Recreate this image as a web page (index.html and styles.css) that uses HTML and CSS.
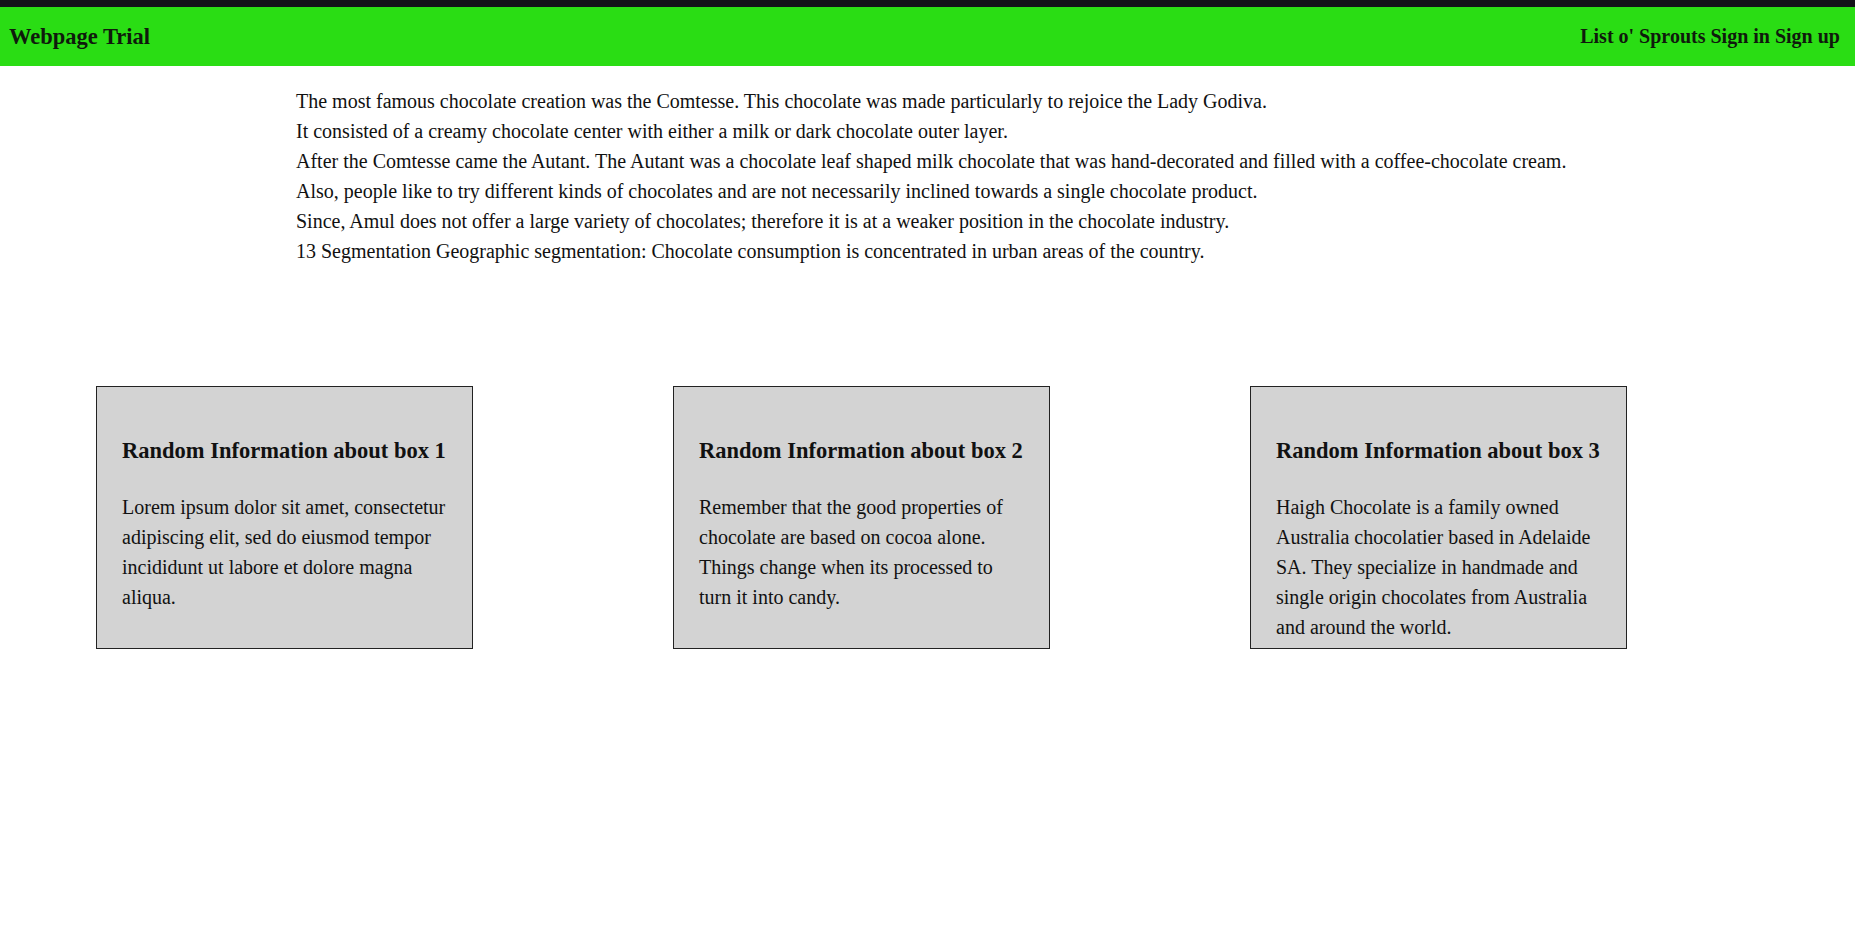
FILE: index.html
```html
<!DOCTYPE html>
<html lang="en">
<head>
<meta charset="utf-8">
<title>Webpage Trial</title>
<link rel="stylesheet" href="styles.css">
</head>
<body>
<div class="topbar"></div>
<header class="header">
  <div class="brand">Webpage Trial</div>
  <nav class="nav">
    <a href="#">List o' Sprouts</a>
    <a href="#">Sign in</a>
    <a href="#">Sign up</a>
  </nav>
</header>
<main>
  <section class="intro">
    <p>The most famous chocolate creation was the Comtesse. This chocolate was made particularly to rejoice the Lady Godiva.</p>
    <p>It consisted of a creamy chocolate center with either a milk or dark chocolate outer layer.</p>
    <p>After the Comtesse came the Autant. The Autant was a chocolate leaf shaped milk chocolate that was hand-decorated and filled with a coffee-chocolate cream.</p>
    <p>Also, people like to try different kinds of chocolates and are not necessarily inclined towards a single chocolate product.</p>
    <p>Since, Amul does not offer a large variety of chocolates; therefore it is at a weaker position in the chocolate industry.</p>
    <p>13 Segmentation Geographic segmentation: Chocolate consumption is concentrated in urban areas of the country.</p>
  </section>
  <section class="boxes">
    <div class="box">
      <h2>Random Information about box 1</h2>
      <p>Lorem ipsum dolor sit amet, consectetur adipiscing elit, sed do eiusmod tempor incididunt ut labore et dolore magna aliqua.</p>
    </div>
    <div class="box">
      <h2>Random Information about box 2</h2>
      <p>Remember that the good properties of chocolate are based on cocoa alone. Things change when its processed to turn it into candy.</p>
    </div>
    <div class="box">
      <h2>Random Information about box 3</h2>
      <p>Haigh Chocolate is a family owned Australia chocolatier based in Adelaide SA. They specialize in handmade and single origin chocolates from Australia and around the world.</p>
    </div>
  </section>
</main>
</body>
</html>
```

FILE: styles.css
```css
html, body {
  margin: 0;
  padding: 0;
  background: #ffffff;
  font-family: "Liberation Serif", "Times New Roman", serif;
  color: #111111;
}

.topbar {
  height: 7px;
  background: #131219;
}

.header {
  height: 59px;
  background: #2add14;
  display: flex;
  justify-content: space-between;
  align-items: center;
  padding: 0 15px 0 9px;
}

.brand {
  font-size: 22.5px;
  font-weight: bold;
  color: #0f1a0c;
  padding-top: 1px;
}

.nav {
  display: flex;
  gap: 5px;
}

.nav a {
  font-size: 20px;
  font-weight: bold;
  color: #0f1a0c;
  text-decoration: none;
}

.intro {
  padding: 20px 0 0 296px;
}

.intro p {
  margin: 0;
  font-size: 20px;
  line-height: 30px;
}

.boxes {
  display: flex;
  gap: 200px;
  padding: 120px 0 0 96px;
}

.box {
  box-sizing: border-box;
  width: 377px;
  height: 263px;
  background: #d3d3d3;
  border: 1px solid #222222;
  padding: 49px 24px 0 25px;
}

.box h2 {
  margin: 0 0 26px 0;
  font-size: 22.5px;
  line-height: 30px;
  font-weight: bold;
  color: #111111;
}

.box p {
  margin: 0;
  font-size: 20px;
  line-height: 30px;
}
```
